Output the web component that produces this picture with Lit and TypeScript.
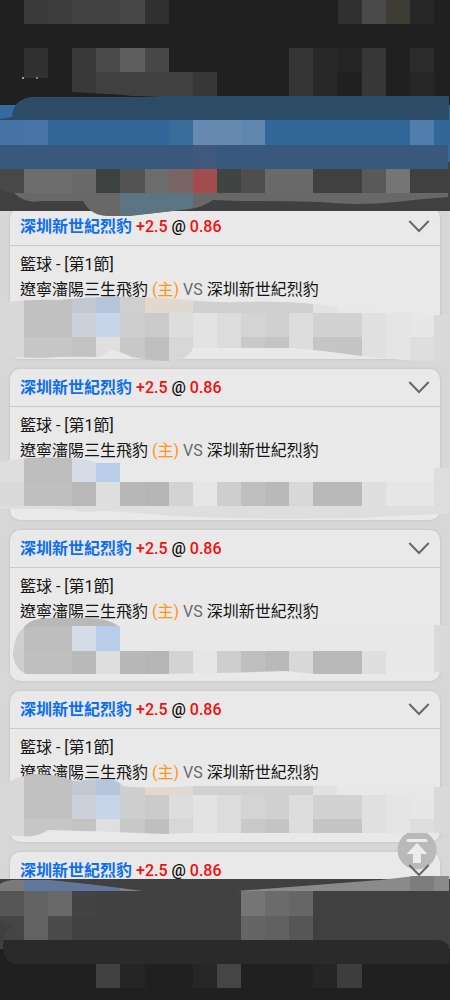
import { LitElement, html, svg, css, nothing } from "lit";
import { customElement, property } from "lit/decorators.js";

type Tile = [x: number, y: number, w: number, h: number, fill: string];

const tiles = (list: Tile[]) =>
  list.map(([x, y, w, h, fill]) => svg`<rect x=${x} y=${y} width=${w} height=${h} fill=${fill}></rect>`);

const headerTiles: Tile[] = [
  [24, 0, 24, 24, "#3a3a3a"], [48, 0, 24, 24, "#3e3e3e"], [72, 0, 48, 24, "#424242"], [120, 0, 25, 24, "#474747"], [145, 0, 24, 24, "#303030"],
  [338, 0, 24, 24, "#303030"], [362, 0, 24, 24, "#4a4a4a"], [386, 0, 24, 24, "#3c3b34"], [410, 0, 24, 24, "#272727"],
  [24, 48, 24, 30, "#313131"], [72, 48, 24, 48, "#393939"], [96, 48, 24, 24, "#4a4a4a"], [120, 48, 25, 24, "#5e5e5e"], [145, 48, 24, 24, "#474747"],
  [96, 72, 97, 24, "#404040"], [193, 72, 24, 24, "#373737"],
  [289, 48, 24, 48, "#353535"], [313, 48, 24, 48, "#292929"], [337, 48, 25, 24, "#252525"], [362, 48, 24, 48, "#373737"], [410, 48, 24, 24, "#2b2b2b"], [410, 72, 24, 24, "#262626"],
];
const bandTiles: Tile[] = [
  [0, 120, 24, 25, "#4573a5"], [24, 120, 24, 25, "#4874a8"], [48, 120, 145, 25, "#336699"], [169, 120, 24, 25, "#3a6c9b"], [193, 120, 48, 25, "#678bb0"], [241, 120, 24, 25, "#6087ad"],
  [265, 120, 185, 25, "#32679a"], [410, 120, 24, 25, "#507dab"],
  [0, 145, 448, 24, "#38597d"], [193, 145, 24, 24, "#3f587c"],
  [0, 169, 24, 24, "#484848"], [24, 169, 48, 24, "#6d6d6d"], [72, 169, 24, 24, "#6a6a6a"], [96, 169, 24, 24, "#3d4240"], [120, 169, 25, 24, "#535353"], [145, 169, 24, 24, "#6c6c6c"],
  [169, 169, 24, 24, "#796664"], [193, 169, 24, 24, "#a24c4e"], [217, 169, 24, 24, "#414443"], [241, 169, 24, 24, "#4e4e4e"], [265, 169, 48, 24, "#6a6a6a"],
  [362, 169, 24, 24, "#595959"], [386, 169, 24, 24, "#757575"],
];
const footerTiles: Tile[] = [
  [0, 891, 24, 25, "#555555"], [24, 891, 24, 49, "#626262"], [48, 891, 24, 25, "#696969"], [48, 916, 24, 24, "#4b4b4b"], [72, 891, 24, 25, "#434343"], [0, 916, 24, 24, "#454545"],
  [241, 891, 24, 25, "#757575"], [265, 891, 24, 25, "#6b6b6b"], [289, 891, 24, 25, "#666666"],
  [241, 916, 24, 24, "#656565"], [265, 916, 24, 24, "#616161"], [289, 916, 24, 24, "#565656"],
];
const footerLowTiles: Tile[] = [
  [96, 964, 24, 24, "#404040"], [120, 964, 25, 24, "#252525"], [193, 964, 24, 24, "#262626"], [217, 964, 24, 24, "#454545"], [313, 964, 24, 24, "#252525"], [337, 964, 25, 24, "#3d3d3d"],
];

interface Cover { top: number; outline: string; tiles: Tile[] }

const midRow = (y: number, h: number): Tile[] => [
  [0, y, 24, h, "#dadada"], [24, y, 48, h, "#c0c0c0"], [72, y, 24, h, "#b9b9b9"], [96, y, 24, h, "#dedede"], [120, y, 25, h, "#b8b8b8"], [145, y, 24, h, "#b5b5b5"],
  [169, y, 24, h, "#d3d3d3"], [193, y, 24, h, "#e6e6e6"], [217, y, 24, h, "#cecece"], [241, y, 24, h, "#bfbfbf"], [265, y, 24, h, "#b9b9b9"],
  [289, y, 24, h, "#d8d8d8"], [313, y, 49, h, "#b9b9b9"], [362, y, 24, h, "#dfdfdf"],
];
const softRows = (a: number, b: number, c: number, end: number): Tile[] => [
  [0, a, 24, end - a, "#d8d8d8"], [24, a, 48, c - a, "#c1c1c1"], [24, c, 48, end - c, "#c6c6c6"],
  [72, a, 24, b - a, "#c3c9d3"], [72, b, 24, c - b, "#cbd0da"], [72, c, 24, end - c, "#c3c3c3"],
  [96, a, 24, b - a, "#b7c5dc"], [96, b, 24, c - b, "#c6d5ea"], [96, c, 24, end - c, "#dfdfdf"],
  [120, a, 25, b - a, "#cfcfcf"], [120, b, 25, c - b, "#cecece"], [120, c, 25, end - c, "#c8c8c8"],
  [145, a, 24, b - a, "#e2d8cd"], [145, b, 24, c - b, "#cbcbcb"], [145, c, 24, end - c, "#bfbfbf"],
  [169, a, 24, b - a, "#dfd9d1"], [169, b, 24, c - b, "#dddddd"], [169, c, 24, end - c, "#d7d7d7"],
  [193, a, 120, b - a, "#d0d0d0"], [193, b, 24, end - b, "#e3e3e3"], [217, b, 24, end - b, "#dcdcdc"],
  [241, b, 24, c - b, "#d4d4d4"], [241, c, 24, end - c, "#c9c9c9"], [265, b, 24, c - b, "#d0d0d0"], [265, c, 24, end - c, "#c4c4c4"],
  [289, b, 24, end - b, "#dddddd"], [313, a, 24, b - a, "#e2e2e2"], [337, a, 97, b - a, "#e8e8e8"],
  [313, b, 49, c - b, "#d2d2d2"], [313, c, 49, end - c, "#c5c5c5"], [362, b, 24, end - b, "#e0e0e0"],
  [386, b, 24, end - b, "#e5e5e5"], [410, b, 24, c - b, "#e7e7e7"], [410, c, 24, end - c, "#dedede"], [434, a, 15, end - a, "#dadada"],
];

const covers: Cover[] = [
  {
    top: 208,
    outline: "M0 303 Q28 299 58 300 Q90 297 110 297 Q150 296 185 300 Q220 303 240 302 Q290 301 313 304 L337 307 L434 315 H449 V361 H420 Q385 359 361 356 Q320 350 290 348 L193 348 Q188 360 172 361 Q150 361 132 357 Q118 351 112 350 L100 357 Q65 356 42 358 Q20 358 0 355 Z",
    tiles: softRows(296, 313, 337, 362),
  },
  {
    top: 369,
    outline: "M0 462 Q28 456 60 458 Q86 458 96 463 H120 V482 H434 V468 H449 V514 Q400 515 360 518 Q260 520 172 516 Q120 511 97 511 Q85 514 75 510 Q40 508 0 509 Z",
    tiles: [
      [0, 456, 449, 64, "#dedede"], [24, 456, 48, 26, "#bebebe"], [72, 456, 24, 26, "#d5dce7"], [96, 463, 24, 19, "#b8cde9"], [120, 463, 314, 19, "#e8e8e8"],
      [386, 482, 48, 24, "#e6e6e6"], ...midRow(482, 24),
    ],
  },
  {
    top: 530,
    outline: "M24 627 Q31 618 50 618 H88 Q108 618 120 627 H434 V625 H449 V672 H386 V674 H315 L285 671 L220 673 L160 674 L96 678 Q65 674 35 676 Q15 674 13 654 Q14 635 24 627 Z",
    tiles: [
      [0, 615, 24, 65, "#cfcfcf"], [24, 615, 96, 12, "#b8b8b8"], [24, 627, 48, 24, "#bebebe"], [72, 626, 24, 25, "#d5dce7"], [96, 626, 24, 25, "#b8cde9"],
      [120, 626, 242, 25, "#e7e8e7"], [362, 626, 72, 48, "#e8e8e8"], ...midRow(651, 23), [0, 651, 24, 27, "#cecece"], [434, 625, 15, 47, "#dadada"],
    ],
  },
  {
    top: 691,
    outline: "M0 787 Q15 777 32 774 Q55 773 74 781 Q90 779 110 779 Q119 781 123 786 Q150 789 190 786 H434 V787 H449 V833 H190 L165 834 Q100 831 48 830 Q37 838 20 836 L0 834 Z",
    tiles: softRows(773, 795, 819, 838),
  },
];

@customElement("bet-card")
export class BetCard extends LitElement {
  @property({ attribute: false }) cover?: Cover;

  static styles = css`
    :host { display: block; }
    .card {
      background: #e9e9e9;
      border-radius: 10px;
      box-shadow: 0 0 3px rgba(0, 0, 0, 0.12);
    }
    .head {
      display: flex;
      align-items: center;
      justify-content: space-between;
      height: 37px;
      padding: 0 10px;
      border-bottom: 1px solid #c9c9c9;
    }
    .title { margin: 0; font-size: 16px; line-height: 25px; font-weight: 500; }
    .team { color: #0d6ff0; font-weight: 700; }
    .num { color: #f50d0d; }
    .toggle {
      display: block;
      position: relative;
      z-index: 2;
      padding: 0;
      border: 0;
      background: none;
      cursor: pointer;
    }
    .toggle svg { display: block; }
    .body { padding: 6px 10px 0; }
    .line { margin: 0; font-size: 16px; line-height: 25px; color: #151515; }
    .home { color: #ff9517; }
    .vs { color: #6a6a6a; }
    .cover {
      display: block;
      position: relative;
      z-index: 2;
      width: calc(100% + 40px);
      height: 57px;
      margin: 0 -20px;
      overflow: visible;
      pointer-events: none;
    }
  `;

  render() {
    const c = this.cover;
    return html`<article class="card">
      <header class="head">
        <h2 class="title"><span class="team">深圳新世紀烈豹</span> <span class="num">+2.5</span> @ <span class="num">0.86</span></h2>
        <button class="toggle" type="button" aria-label="展開">
          <svg width="22" height="16" viewBox="0 0 22 16" fill="none" stroke="#686868" stroke-width="2"><path d="M1.3 2 L11 12 L20.7 2"></path></svg>
        </button>
      </header>
      ${c
        ? html`<div class="body">
            <p class="line">籃球 - [第1節]</p>
            <p class="line">遼寧瀋陽三生飛豹 <span class="home">(主)</span> <span class="vs">VS</span> 深圳新世紀烈豹</p>
            <svg class="cover" viewBox="0 ${c.top + 94} 450 57" preserveAspectRatio="none" aria-hidden="true">
              <clipPath id="outline"><path d=${c.outline}></path></clipPath>
              <g clip-path="url(#outline)" shape-rendering="crispEdges">${tiles(c.tiles)}</g>
            </svg>
          </div>`
        : nothing}
    </article>`;
  }
}

@customElement("app-root")
export class AppRoot extends LitElement {
  static styles = css`
    :host {
      display: flex;
      flex-direction: column;
      position: relative;
      height: 100vh;
      overflow: hidden;
      background: #d7d7d7;
      color: #0c0c0c;
      font-family: Roboto, "Noto Sans CJK TC", sans-serif;
    }
    .top, .bottom {
      display: block;
      position: relative;
      z-index: 3;
      flex: none;
      width: 100%;
      overflow: visible;
    }
    .top { height: 208px; }
    .bottom { height: 121px; }
    .list {
      display: flex;
      flex-direction: column;
      gap: 10px;
      flex: 1;
      min-height: 0;
      padding: 0 10px;
      overflow-x: hidden;
      overflow-y: auto;
      scrollbar-width: none;
    }
    .list bet-card { flex: none; }
    .to-top {
      position: absolute;
      right: 13px;
      bottom: 130px;
      z-index: 1;
      padding: 0;
      border: 0;
      background: none;
      cursor: pointer;
    }
    .to-top svg { display: block; }
  `;

  private scrollUp() {
    this.renderRoot.querySelector(".list")?.scrollTo({ top: 0, behavior: "smooth" });
  }

  render() {
    return html`
      <svg class="top" viewBox="0 0 450 208" preserveAspectRatio="none" aria-hidden="true">
        <rect width="450" height="211" fill="#202020"></rect>
        <g shape-rendering="crispEdges">${tiles(headerTiles)}</g>
        <path d="M24 78 H49 V73 H72 V92 L105 94 Q125 94 142 98 H0 V78 Z" fill="#202020"></path>
        <rect x="22" y="77" width="2" height="2" fill="#9a9a9a"></rect>
        <rect x="36" y="77" width="2" height="2" fill="#858585"></rect>
        <path d="M0 105 H24 V121 H0 Z M446 105 H450 V162 H446 Z" fill="#336a9f"></path>
        <path d="M0 119 L12 117 Q13 99 32 97 L140 97 L160 96 H449 V121 H0 Z" fill="#2c4b67"></path>
        <rect y="162" width="450" height="49" fill="#404040"></rect>
        <g shape-rendering="crispEdges">${tiles(bandTiles)}</g>
        <path d="M0 189 Q8 193 14 193 H0 Z" fill="#404040"></path>
        <path d="M14 193 H448 V197 Q420 199 395 202 Q360 206 320 202 Q270 201 240 201 L213 200 Q203 207 190 209 L130 216 H108 Q91 216 83 201 H40 Q25 204 14 193 Z" fill="#686868"></path>
        <path d="M120 193 H193 V208 Q160 213 120 216 Z" fill="#5b7682"></path>
      </svg>
      <main class="list">
        ${covers.map((c) => html`<bet-card .cover=${c}></bet-card>`)}
        <bet-card></bet-card>
      </main>
      <button class="to-top" type="button" aria-label="回到頂部" @click=${this.scrollUp}>
        <svg width="40" height="40" viewBox="0 0 40 40">
          <circle cx="20" cy="20" r="19.5" fill="#b9b9b9"></circle>
          <path d="M11 10.5 H29" stroke="#ececec" stroke-width="3" stroke-linecap="round"></path>
          <path d="M20 13 L30.5 24 H24 V33 H16 V24 H9.5 Z" fill="#ececec"></path>
        </svg>
      </button>
      <svg class="bottom" viewBox="0 879 450 121" preserveAspectRatio="none" aria-hidden="true">
        <rect y="879" width="450" height="121" fill="#404040"></rect>
        <path d="M0 891 V884 Q8 879 22 880 H24 V891 Z" fill="#7a7a7a"></path>
        <path d="M24 880 H50 Q90 884 120 888 V891 H24 Z" fill="#60779b"></path>
        <path d="M120 888 L143 891 H120 Z" fill="#837d86"></path>
        <path d="M237 891 L380 880 L415 876 H449 V891 Z" fill="#8a8a8a"></path>
        <path d="M410 876.5 L415 876 H434 V891 H410 Z" fill="#7d7d7d"></path>
        <g shape-rendering="crispEdges">${tiles(footerTiles)}</g>
        <path d="M0 921 L12 927 Q5 932 4 940 H0 Z" fill="#404040"></path>
        <path d="M0 949 H450 V1000 H0 Z" fill="#202020"></path>
        <path d="M4 940 H438 Q446 941 449 947 V964 H14 Q2 960 3 944 Z" fill="#2a2a2a"></path>
        <g shape-rendering="crispEdges">${tiles(footerLowTiles)}</g>
      </svg>
    `;
  }
}
